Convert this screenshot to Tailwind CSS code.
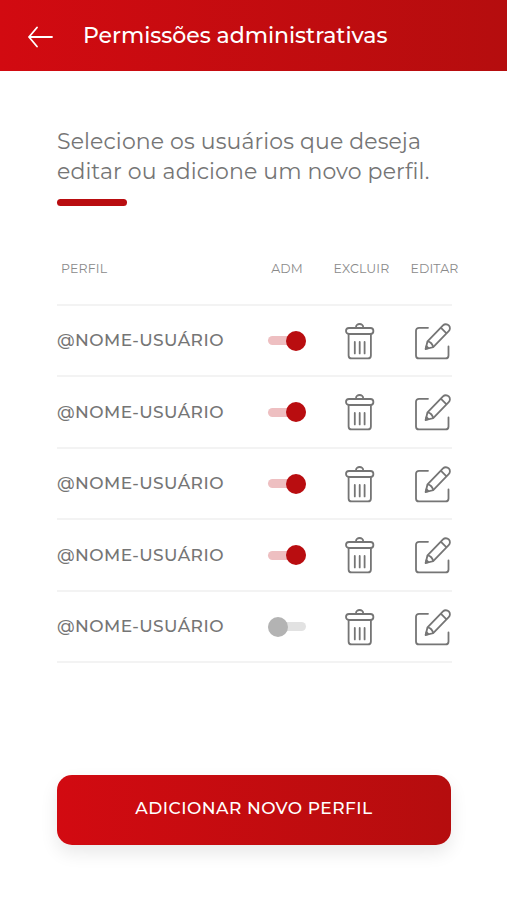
<!DOCTYPE html>
<html lang="pt-BR">
<head>
    <meta charset="UTF-8">
    <meta name="viewport" content="width=device-width, initial-scale=1.0">
    <title>Permissões administrativas</title>
    <script src="https://cdn.jsdelivr.net/npm/@tailwindcss/browser@4"></script>
</head>
<body class="bg-white font-['Montserrat','Inter',sans-serif] text-[#757575] h-[900px] overflow-hidden whitespace-nowrap">
    <!-- Icons -->
    <svg class="hidden">
        <symbol id="trash" viewBox="0 0 30 38">
            <g fill="none" stroke="currentColor" stroke-width="1.8" stroke-linecap="round" stroke-linejoin="round">
                <path d="M11 6V5.3a3.6 3.3 0 0 1 7.2 0V6"/>
                <rect x="1" y="6" width="27.400" height="6" rx="3"/>
                <path d="M3.6 12v21.400a3 3 0 0 0 3 3h16.300a3 3 0 0 0 3-3V12"/>
                <path d="M9.800 20v11.400M14.700 20v11.400M19.600 20v11.400"/>
            </g>
        </symbol>
        <symbol id="edit" viewBox="0 0 38 38">
            <g fill="none" stroke="currentColor" stroke-width="1.8" stroke-linecap="round" stroke-linejoin="round">
                <path d="M14 5.800H5a3 3 0 0 0-3 3v24.600a3 3 0 0 0 3 3h26.500a3 3 0 0 0 3-3V24.500"/>
                <path d="M11.700 27l1.800-7.700L29 3.400a3.800 3.800 0 0 1 5.700 5.800L19.200 25.100zM13.500 19.300q4.600.8 5.700 5.800M26.800 5.700l5.700 5.700"/>
                <path d="M11.700 27l.7-2.800 2 2z" fill="currentColor"/>
            </g>
        </symbol>
    </svg>

    <!-- Header -->
    <header class="flex items-center h-[70.5px] pl-7 bg-linear-to-r from-[#d20a11] to-[#b50d0e] text-white">
        <svg class="w-[26px] h-[22px] mt-1 mr-[29px]" viewBox="0 0 26 22" fill="none" stroke="currentColor" stroke-width="1.8" stroke-linecap="round" stroke-linejoin="round">
            <path d="M24 11H1M9 1.500L1 11l8 9.500"/>
        </svg>
        <h1 class="mt-0.5 text-[22px] leading-7 font-medium tracking-[-0.02px]">Permissões administrativas</h1>
    </header>

    <main class="w-[395px] ml-[57px] pt-[56px]">
        <p class="text-[22px] leading-[30px] tracking-[0.12px]">
            Selecione os usuários que deseja<br>
            editar ou adicione um novo perfil.
        </p>
        <div class="w-[70px] h-[7px] mt-3 rounded-full bg-[#b90d10]"></div>

        <!-- Users table -->
        <div class="grid grid-cols-[193px_74px_75px_71px] w-[413px] mt-[53px] h-[45px] text-[12.5px] leading-5 tracking-[0.15px] text-[#8a8a8a] text-center">
            <span class="pl-1 text-left">PERFIL</span>
            <span>ADM</span>
            <span>EXCLUIR</span>
            <span>EDITAR</span>
        </div>
        <ul id="users" class="border-t-2 border-[#f3f3f3]"></ul>

        <button class="block w-[394px] h-[70px] mt-[112px] pb-[3px] rounded-[15px] bg-linear-to-r from-[#d20a11] to-[#b50d0e] text-white text-[17px] font-medium tracking-[0.5px] shadow-[0_8px_18px_rgba(0,0,0,0.09)]">ADICIONAR NOVO PERFIL</button>
    </main>

    <script>
        const users = [
            { name: '@NOME-USUÁRIO', adm: true },
            { name: '@NOME-USUÁRIO', adm: true },
            { name: '@NOME-USUÁRIO', adm: true },
            { name: '@NOME-USUÁRIO', adm: true },
            { name: '@NOME-USUÁRIO', adm: false },
        ];

        document.getElementById('users').innerHTML = users.map(user => `
            <li class="h-[71.5px] border-b-2 border-[#f3f3f3]">
                <div class="grid grid-cols-[193px_74px_71px_75px] items-center justify-items-center w-[413px] h-full">
                    <span class="justify-self-start mt-px text-[17px] font-medium tracking-[0.45px]">${user.name}</span>
                    <span class="flex items-center w-[38px] h-[9px] mt-px rounded-full ${user.adm ? 'justify-end bg-[#eebfc1]' : 'bg-[#e2e2e2]'}">
                        <span class="size-5 shrink-0 rounded-full ${user.adm ? 'bg-[#b90d10]' : 'bg-[#b3b3b3]'}"></span>
                    </span>
                    <svg class="w-[30px] h-[38px] mt-px"><use href="#trash"/></svg>
                    <svg class="w-[38px] h-[38px] mt-px"><use href="#edit"/></svg>
                </div>
            </li>
        `).join('');
    </script>
</body>
</html>
